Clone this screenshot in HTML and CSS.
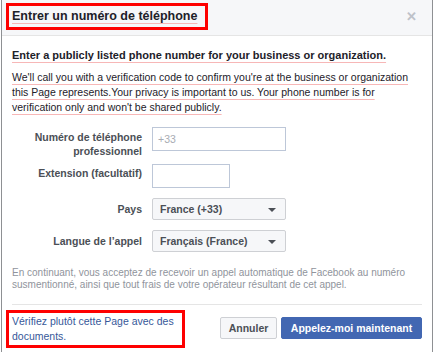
FILE: index.html
```html
<!DOCTYPE html>
<html lang="fr">
<head>
<meta charset="utf-8">
<title>Entrer un numéro de téléphone</title>
<link rel="stylesheet" href="styles.css">
</head>
<body>
<div class="dialog">
  <div class="header">
    <h1 class="title"><span class="mark">Entrer un numéro de téléphone</span></h1>
    <span class="close">&#x2715;</span>
  </div>
  <div class="body">
    <p class="lead"><span class="mark">Enter a publicly listed phone number for your business or organization.</span></p>
    <p class="desc"><span class="mark">We'll call you with a verification code to confirm you're at the business or organization this Page represents.Your privacy is important to us. Your phone number is for verification only and won't be shared publicly.</span></p>
    <div class="row row-phone">
      <label class="label label-two">Numéro de téléphone professionnel</label>
      <div class="input input-wide placeholder">+33</div>
    </div>
    <div class="row row-ext">
      <label class="label">Extension (facultatif)</label>
      <div class="input input-short"></div>
    </div>
    <div class="row row-sel">
      <label class="label">Pays</label>
      <div class="select">France (+33)<span class="arrow"></span></div>
    </div>
    <div class="row row-sel">
      <label class="label">Langue de l’appel</label>
      <div class="select">Français (France)<span class="arrow"></span></div>
    </div>
    <p class="notice">En continuant, vous acceptez de recevoir un appel automatique de Facebook au numéro susmentionné, ainsi que tout frais de votre opérateur résultant de cet appel.</p>
  </div>
  <div class="footer">
    <a class="doclink">Vérifiez plutôt cette Page avec des documents.</a>
    <div class="buttons">
      <button class="btn btn-cancel">Annuler</button>
      <button class="btn btn-primary">Appelez-moi maintenant</button>
    </div>
  </div>
</div>
</body>
</html>
```
FILE: styles.css
```css
* { box-sizing: border-box; }
html, body { margin: 0; padding: 0; background: #fff; }
body {
  font-family: "Liberation Sans", Arial, Helvetica, sans-serif;
  color: #1d2129;
  width: 434px;
  height: 352px;
  overflow: hidden;
}
.dialog {
  margin-left: 1px;
  width: 432px;
  height: 352px;
  border-left: 1px solid #8e9093;
  border-right: 1px solid #8e9093;
  background: #fff;
}
.header {
  height: 36px;
  background: #f6f7f9;
  border-bottom: 1px solid #e5e5e5;
  display: flex;
  align-items: flex-start;
  justify-content: space-between;
  padding: 3px 15px 0 4px;
}
.title {
  margin: 0;
  font-size: 12.5px;
  font-weight: bold;
  line-height: 21px;
  border: 3px solid #fe0000;
  padding: 0 8px 0 3px;
}
.close {
  color: #bec2c9;
  font-size: 13px;
  font-weight: bold;
  line-height: 28px;
}
.mark {
  text-decoration: underline;
  text-decoration-color: #f7b7b7;
  text-decoration-thickness: 1px;
  text-underline-offset: 3px;
}
.body {
  padding: 11px 10px 0 10px;
}
.lead {
  margin: 0;
  font-size: 11px;
  font-weight: bold;
  line-height: 16px;
}
.desc {
  margin: 7px 0 0 0;
  font-size: 10.5px;
  line-height: 15px;
}
.row {
  display: flex;
  align-items: flex-start;
  gap: 10px;
}
.label {
  width: 130px;
  flex: none;
  text-align: right;
  font-size: 10.5px;
  font-weight: bold;
  color: #4b4f56;
  line-height: 15px;
}
.row-phone { margin-top: 12px; }
.row-phone .label { line-height: 14px; padding-top: 3px; }
.row-ext { margin-top: 6px; }
.row-ext .label { padding-top: 2px; }
.row-sel { margin-top: 10px; align-items: center; }
.input {
  height: 24px;
  border: 1px solid #bdc7d8;
  background: #fff;
  font-size: 10.5px;
  line-height: 22px;
  padding: 0 5px;
}
.input-wide { width: 134px; }
.input-short { width: 78px; }
.placeholder { color: #a8acb3; }
.select {
  position: relative;
  width: 134px;
  height: 22px;
  border: 1px solid #ced0d4;
  border-radius: 2px;
  background: #f6f7f9;
  font-size: 10.5px;
  font-weight: bold;
  color: #4b4f56;
  line-height: 20px;
  padding: 0 7px;
}
.arrow {
  position: absolute;
  right: 9px;
  top: 9px;
  width: 0;
  height: 0;
  border-left: 4px solid transparent;
  border-right: 4px solid transparent;
  border-top: 4px solid #4b4f56;
}
.notice {
  margin: 15px 0 0 0;
  font-size: 10px;
  line-height: 12px;
  color: #90949c;
  padding-bottom: 13px;
  border-bottom: 1px solid #e5e5e5;
}
.footer {
  display: flex;
  align-items: flex-start;
  justify-content: space-between;
  padding: 5px 10px 0 4px;
}
.doclink {
  display: block;
  width: 179px;
  border: 3px solid #fe0000;
  padding: 1px 3px;
  font-size: 10.5px;
  line-height: 15px;
  color: #365899;
}
.buttons {
  display: flex;
  gap: 4px;
  margin-top: 7px;
}
.btn {
  font-family: inherit;
  font-size: 10.5px;
  font-weight: bold;
  height: 22px;
  line-height: 20px;
  padding: 0;
  border-radius: 2px;
  margin: 0;
  white-space: nowrap;
  text-align: center;
}
.btn-cancel {
  background: #f6f7f9;
  border: 1px solid #ced0d4;
  color: #4b4f56;
  width: 57px;
}
.btn-primary {
  background: #4267b2;
  border: 1px solid #4267b2;
  color: #fff;
  width: 141px;
}
```
